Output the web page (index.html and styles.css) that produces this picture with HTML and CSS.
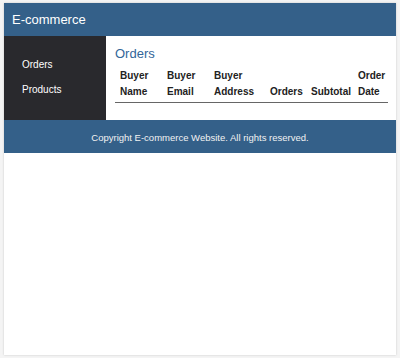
FILE: index.html
```html
<!DOCTYPE html>
<html>
<head>
<meta charset="utf-8">
<link rel="stylesheet" href="styles.css">
</head>
<body>
<div class="page">
  <header class="topbar">E-commerce</header>
  <div class="layout">
    <nav class="sidebar">
      <a class="nav-link">Orders</a>
      <a class="nav-link">Products</a>
    </nav>
    <main class="content">
      <h2 class="title">Orders</h2>
      <table class="orders">
        <colgroup>
          <col class="c1"><col class="c2"><col class="c3"><col class="c4"><col class="c5"><col class="c6">
        </colgroup>
        <thead>
          <tr>
            <th>Buyer<br>Name</th>
            <th>Buyer<br>Email</th>
            <th>Buyer<br>Address</th>
            <th>Orders</th>
            <th>Subtotal</th>
            <th>Order<br>Date</th>
          </tr>
        </thead>
        <tbody></tbody>
      </table>
    </main>
  </div>
  <footer class="footer">Copyright E-commerce Website. All rights reserved.</footer>
</div>
</body>
</html>
```

FILE: styles.css
```css
html, body {
  margin: 0;
  padding: 0;
  background: #f4f4f4;
}
body {
  font-family: "Liberation Sans", Arial, sans-serif;
  padding: 3px 4px;
  box-sizing: border-box;
  height: 358px;
}
.page {
  background: #fff;
  height: 352px;
  box-shadow: 0 0 2px rgba(0,0,0,0.18);
}
.topbar {
  height: 33px;
  background: #346089;
  color: #fff;
  font-size: 13px;
  display: flex;
  align-items: center;
  padding: 0 8px;
}
.layout {
  display: flex;
  height: 84px;
}
.sidebar {
  width: 102px;
  background: #29292d;
  display: flex;
  flex-direction: column;
  padding: 23px 0 0 18px;
  box-sizing: border-box;
  gap: 13px;
}
.nav-link {
  color: #fff;
  font-size: 10px;
  line-height: 12px;
}
.content {
  flex: 1;
  padding: 9px 8px 0 9px;
}
.title {
  margin: 0 0 5px;
  font-size: 13px;
  line-height: 18px;
  font-weight: normal;
  color: #336699;
}
.orders {
  border-collapse: collapse;
  width: 273px;
  table-layout: fixed;
}
.c1 { width: 47px; }
.c2 { width: 47px; }
.c3 { width: 56px; }
.c4 { width: 41px; }
.c5 { width: 47px; }
.c6 { width: 35px; }
.orders th {
  text-align: left;
  font-size: 10px;
  line-height: 16px;
  font-weight: bold;
  color: #222;
  vertical-align: bottom;
  padding: 0 0 2px 5px;
  border-bottom: 1px solid #666;
  white-space: nowrap;
}
.footer {
  height: 33px;
  box-sizing: border-box;
  padding-top: 1px;
  background: #346089;
  color: #f2f2f2;
  font-size: 9.5px;
  display: flex;
  align-items: center;
  justify-content: center;
}
```
